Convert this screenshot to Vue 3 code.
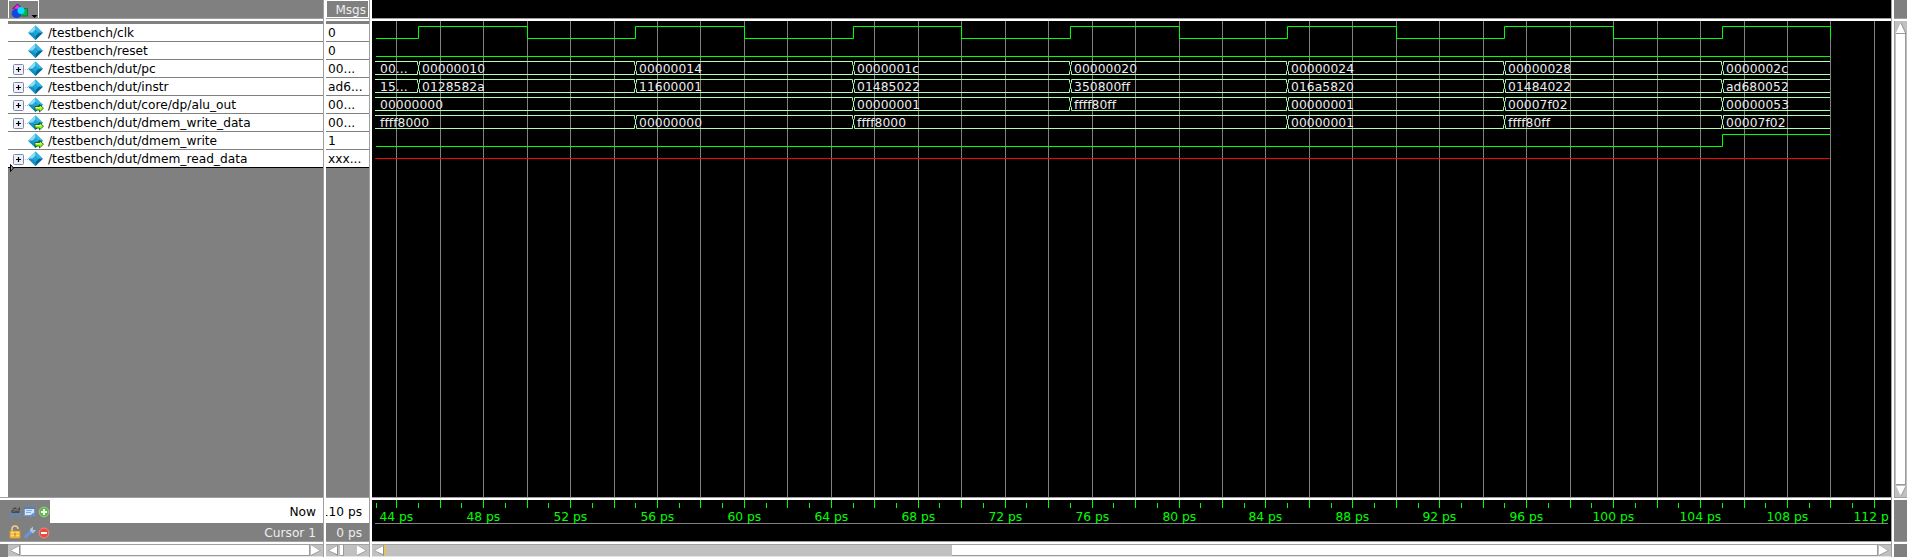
<script setup>
const signals = [
  { name: '/testbench/clk', value: '0' },
  { name: '/testbench/reset', value: '0' },
  { name: '/testbench/dut/pc', value: '00...', bus: true },
  { name: '/testbench/dut/instr', value: 'ad6...', bus: true },
  { name: '/testbench/dut/core/dp/alu_out', value: '00...', bus: true, out: true },
  { name: '/testbench/dut/dmem_write_data', value: '00...', bus: true, out: true },
  { name: '/testbench/dut/dmem_write', value: '1', out: true },
  { name: '/testbench/dut/dmem_read_data', value: 'xxx...', bus: true }
]

// Wave canvas starts 372px from the left; 21.731px per picosecond.
const tx = t => Math.floor(24.7 + (t - 44) * 21.731)
const END = tx(110)
const grid = Array.from({ length: 35 }, (_, i) => tx(44 + i * 2))
const minor = Array.from({ length: 35 }, (_, i) => (i ? tx(43 + i * 2) : 4))
const labels = Array.from({ length: 18 }, (_, i) => 44 + i * 4)

let clk = `M4 17.5H${tx(45) + 0.5}`
for (let t = 45; t <= 105; t += 10) {
  clk += `V5.5H${tx(t + 5) + 0.5}V17.5`
  if (t < 105) clk += `H${tx(t + 10) + 0.5}`
}
const writeLine = `M4 125.5H${tx(105) + 0.5}V113.5H${END}`

const buses = [
  { y: 40, v: [[43, '00...'], [45, '00000010'], [55, '00000014'], [65, '0000001c'], [75, '00000020'], [85, '00000024'], [95, '00000028'], [105, '0000002c']] },
  { y: 58, v: [[43, '15...'], [45, '0128582a'], [55, '11600001'], [65, '01485022'], [75, '350800ff'], [85, '016a5820'], [95, '01484022'], [105, 'ad680052']] },
  { y: 76, v: [[43, '00000000'], [65, '00000001'], [75, 'ffff80ff'], [85, '00000001'], [95, '00007f02'], [105, '00000053']] },
  { y: 94, v: [[43, 'ffff8000'], [55, '00000000'], [65, 'ffff8000'], [85, '00000001'], [95, 'ffff80ff'], [105, '00007f02']] }
]
function busPath(b) {
  const y = b.y + 0.5
  let d = ''
  b.v.forEach(([t], i) => {
    const x0 = i ? tx(t) + 1.5 : 3
    const next = b.v[i + 1]
    const x1 = next ? tx(next[0]) - 0.5 : END
    d += `M${x0} ${y}H${x1}M${x0} ${y + 13}H${x1}`
    if (i) {
      const c = tx(t) + 0.5
      d += `M${c + 1} ${y}v3l-1 1.5v4l1 1.5v3M${c - 1} ${y}v3l1 1.5M${c} ${y + 8.5}l-1 1.5v3`
    }
  })
  return d
}
const textX = t => (t === 43 ? 8 : tx(t) + 4)
</script>

<template>
  <div class="wave-window">
    <div class="gutter">
      <div class="g-head"></div><div class="g-body"></div><div class="g-foot"></div>
    </div>

    <section class="pane">
      <header class="head">
        <span class="tool">
          <svg width="29" height="17" viewBox="0 0 29 17">
            <path d="M3 8L8.500 3l4.500 4.500-4 2z" fill="#b010b8" />
            <path d="M5.500 7L8.500 4l2.500 2.500-3 1.500z" fill="#f030f0" />
            <path d="M3.500 7.500L8.500 3l5 5" fill="none" stroke="#503060" />
            <path d="M12 7.500h6.500v7.500h-8z" fill="#10b050" stroke="#086030" stroke-width=".7" />
            <ellipse cx="7.500" cy="12.500" rx="4.800" ry="4.500" fill="#1048e0" />
            <circle cx="12" cy="9.500" r="3.500" fill="#00e0ff" />
            <path d="M22.500 14h6l-3 3z" fill="#000" />
          </svg>
        </span>
      </header>
      <div class="hsep"></div>
      <div class="list">
        <div v-for="s in signals" :key="s.name" class="row">
          <span class="expander">
            <svg v-if="s.bus" width="16" height="12" viewBox="0 0 16 12">
              <rect x=".5" y="1.5" width="10" height="10" rx="1" fill="#eef0fa" stroke="#8088a8" />
              <path d="M3 6.500h5M5.500 4v5" stroke="#000" stroke-width="1.200" />
              <path d="M12 6.500h4" stroke="#bbb" stroke-dasharray="1 1" />
            </svg>
          </span>
          <svg class="gem" width="16" height="16" viewBox="0 0 16 16">
            <path d="M7.500 .5l7.300 7.200-7.300 7.300L.2 7.700z" fill="#1ba5d8" />
            <path d="M7.500 .5L.2 7.700h4l3.300-3.200z" fill="#8ddcf5" />
            <path d="M7.500 .5l7.300 7.200h-4L7.500 4.500z" fill="#36b8e6" />
            <path d="M.2 7.700h4l3.300 3.300v4z" fill="#1590c4" />
            <path d="M14.800 7.700h-4l-3.300 3.300v4z" fill="#096690" />
            <path v-if="s.out" d="M7 9.500h4.500V7.500l4 3.700-4 3.800v-2H7z" fill="#9f2" stroke="#174c08" stroke-width=".8" />
            <path v-if="s.out" d="M7.500 10.500h5" stroke="#efb" />
          </svg>
          <span class="name">{{ s.name }}</span>
        </div>
        <svg class="marker" width="4" height="8" viewBox="0 0 4 8"><path d="M.5 .5v7l3-3.500z" fill="#999" stroke="#000" /></svg>
      </div>
      <div class="hsep"></div>
      <div class="now">
        <svg class="icons" width="42" height="23" viewBox="0 0 42 23">
          <path d="M3 13l1-4 3-2 2 2 3-2v6z" fill="#454a50" />
          <path d="M4 9l8 2M5 12l6-4" stroke="#777" />
          <path d="M3 14.500h9M3 12v5M12 12v5" stroke="#4b90df" fill="none" />
          <rect x="16.500" y="7.500" width="10" height="8" fill="#d7e5f7" stroke="#739ccf" />
          <path d="M16 8h11" stroke="#4d83c6" stroke-width="2" />
          <path d="M18 10.500h6M18 12.500h5" stroke="#8aabd3" />
          <path d="M22 17l4-3.500" stroke="#5a90d8" stroke-width="2" />
          <circle cx="36" cy="12" r="4.900" fill="#5cb94b" stroke="#8ed17f" />
          <path d="M33 12h6M36 9v6" stroke="#fff" stroke-width="2" />
        </svg>
        <span class="fill">Now</span>
      </div>
      <div class="cursor">
        <svg class="icons" width="42" height="18" viewBox="0 0 42 18">
          <path d="M4 8V6q0-3 3-3t3 3" fill="none" stroke="#eed18a" stroke-width="1.500" />
          <rect x="2" y="8" width="10" height="7" fill="#f8bd3c" stroke="#d99a27" stroke-width=".7" />
          <path d="M3 9.500h8M3 12.500h8" stroke="#ffdd83" />
          <path d="M7 9.500v4" stroke="#a77a28" />
          <path d="M18 13.500l5.500-5.500" stroke="#6596d8" stroke-width="3.200" stroke-linecap="round" />
          <path d="M22 8V6l3-2.500v3.500h3l-3 3.500z" fill="#a9c4e8" />
          <circle cx="36" cy="10" r="4.900" fill="#e64c40" stroke="#f28a7c" />
          <path d="M33 10h6" stroke="#fff" stroke-width="2" />
        </svg>
        <span>Cursor 1</span>
      </div>
      <div class="hsep"></div>
      <div class="hbar">
        <i class="arrow left"></i><i class="thumb grow"></i><i class="arrow right"></i>
      </div>
    </section>

    <div class="vsep"></div>

    <section class="pane values">
      <header class="head"><span class="msgs">Msgs</span></header>
      <div class="hsep"></div>
      <div class="list">
        <div v-for="s in signals" :key="s.name" class="row"><span class="val">{{ s.value }}</span></div>
      </div>
      <div class="hsep"></div>
      <div class="now"><span class="fill">110 ps</span></div>
      <div class="cursor"><span>0 ps</span></div>
      <div class="hsep"></div>
      <div class="hbar">
        <i class="arrow left"></i><i class="thumb tiny"></i><i class="grow"></i><i class="arrow right"></i>
      </div>
    </section>

    <div class="vsep"></div>

    <section class="pane wave">
      <header class="head"></header>
      <div class="hsep"></div>
      <svg class="canvas" width="1519" height="476" viewBox="0 0 1519 476">
        <rect v-for="x in grid" :key="x" :x="x" y="0" width="1" height="476" fill="#808080" />
        <g fill="none" stroke="#00ff00">
          <path :d="clk" />
          <path :d="`M4 35.500H${END}`" />
          <path :d="writeLine" />
        </g>
        <path :d="`M3 137.500H${END}`" stroke="#ff0000" />
        <g v-for="b in buses" :key="b.y">
          <path :d="busPath(b)" fill="none" stroke="#b0ffb0" />
          <text v-for="[t, s] in b.v" :key="t" :x="textX(t)" :y="b.y + 12" class="data">{{ s }}</text>
        </g>
      </svg>
      <div class="hsep"></div>
      <svg class="canvas" width="1519" height="41" viewBox="0 0 1519 41">
        <rect v-for="x in grid" :key="x" :x="x" y="0" width="1" height="8" fill="#00ff00" />
        <rect v-for="x in minor" :key="x" :x="x" y="3" width="1" height="5" fill="#00ff00" />
        <rect x="3" y="23" width="1513" height="1" fill="#808080" />
        <text v-for="t in labels" :key="t" :x="tx(t) - (t < 100 ? 16.500 : 20.500)" y="21" class="tick">{{ t === 112 ? '112 p' : t + ' ps' }}</text>
      </svg>
      <div class="hsep"></div>
      <div class="hbar">
        <i class="arrow left"></i><i class="mark"></i><i class="track"></i><i class="thumb grow"></i><i class="arrow right"></i>
      </div>
    </section>

    <div class="vsep"></div>

    <section class="pane side">
      <header class="head"></header>
      <div class="hsep"></div>
      <div class="vbar">
        <svg width="12" height="12" viewBox="0 0 12 12"><rect width="12" height="12" fill="#c0c0c0" /><path d="M5.500 1L1 11h9z" fill="#fff" /><path d="M1 11.500h10L6 1" fill="none" stroke="#999" /></svg>
        <i class="vthumb"></i>
        <svg width="12" height="12" viewBox="0 0 12 12"><rect width="12" height="12" fill="#c0c0c0" /><path d="M1 1h10L6 11z" fill="#fff" /><path d="M11 1L6 11" stroke="#999" /></svg>
      </div>
      <div class="hsep"></div>
      <div class="blank"></div>
      <div class="hsep"></div>
      <div class="blank"></div>
    </section>
  </div>
</template>

<style>
html, body { margin: 0; background: #808080; }
</style>

<style scoped>
.wave-window {
  display: grid;
  grid-template-columns: 8px 315px 3px 43px 3px 1519px 3px 13px;
  width: 1907px;
  height: 557px;
  overflow: hidden;
  background: #808080;
  font-family: "DejaVu Sans", sans-serif;
  font-size: 12.2px;
  color: #000;
}
.gutter { display: grid; grid-template-rows: 21px 476px 60px; }
.g-head { background: linear-gradient(#808080 18px, #a0a0a0 18px 19px, #fff 19px); }
.g-body { background: #fff; }
.g-foot { background: linear-gradient(#a0a0a0 1px, #fff 1px 3px, #808080 3px 44px, #a0a0a0 44px 45px, #fff 45px 47px, #808080 47px); }
.pane {
  display: grid;
  grid-template-columns: 100%;
  grid-template-rows: 18px 3px 476px 3px 23px 18px 3px 13px;
  overflow: hidden;
}
.wave, .side { grid-template-rows: 18px 3px 476px 3px 41px 3px 13px; }
.hsep { background: linear-gradient(#a0a0a0 1px, #fff 1px); }
.vsep { background: linear-gradient(90deg, #a0a0a0 1px, #fff 1px); }
.head { display: flex; background: #808080; }
.tool { width: 29px; height: 17px; border: 1px solid #fff; border-bottom: 0; }
.tool svg { display: block; }
.msgs {
  flex: 1;
  box-sizing: border-box;
  border: 1px solid #fff;
  padding-right: 2px;
  text-align: right;
  line-height: 18px;
  color: #eee;
  font-size: 12px;
}
.wave { background: #000; }
.wave .head { background: #000; }
.list { position: relative; padding-top: 3px; }
.row {
  display: flex;
  align-items: center;
  height: 17px;
  border-bottom: 1px solid #808080;
  background: #fff;
  line-height: 17px;
  white-space: pre;
}
.row:nth-child(8) { border-color: #000; }
.expander { width: 15px; height: 12px; margin-left: 5px; }
.expander svg { display: block; }
.gem { margin-top: 1px; flex: none; }
.name { margin-left: 4px; padding-top: 2px; }
.val { padding: 2px 0 0 2px; }
.marker { position: absolute; left: 2px; top: 143px; }
.now { display: flex; background: #808080; line-height: 25px; overflow: hidden; }
.now .fill { flex: 1; display: flex; justify-content: flex-end; padding-right: 7px; background: #fff; white-space: nowrap; }
.icons { flex: none; display: block; }
.cursor { display: flex; justify-content: space-between; padding-right: 7px; line-height: 20px; color: #eee; }
.values .cursor { justify-content: flex-end; }
.values .fill { min-width: 0; }
.hbar {
  display: flex;
  box-sizing: border-box;
  padding: 0 1px;
  border-top: 1px solid #a0a0a0;
  border-bottom: 1px solid #e4e4e4;
  background: #c0c0c0;
}
.thumb { box-sizing: border-box; background: #fff; border-bottom: 1px solid #999; border-right: 1px solid #999; }
.grow { flex: 1; }
.tiny { width: 4px; margin-left: 1px; }
.arrow { width: 12px; height: 11px; background: #c0c0c0; position: relative; }
.arrow::before, .arrow::after { content: ""; position: absolute; inset: 0 1px; }
.arrow::before { background: #909090; }
.arrow::after { background: #fff; }
.left::before { clip-path: polygon(0 50%, 100% 0, 100% 100%); }
.left::after { clip-path: polygon(10% 50%, 90% 9%, 90% 84%); }
.right::before { clip-path: polygon(100% 50%, 0 0, 0 100%); }
.right::after { clip-path: polygon(88% 50%, 0 2%, 0 92%); }
.mark { width: 1px; background: #ffcc00; }
.track { width: 566px; }
.canvas { display: block; }
.data { fill: #eee; font-size: 12.3px; letter-spacing: 0.06px; }
.tick { fill: #00ff00; font-size: 12.3px; }
.vbar {
  display: flex;
  flex-direction: column;
  box-sizing: border-box;
  padding: 1px 0 0;
  border-left: 1px solid #a0a0a0;
  background: #c0c0c0;
}
.vbar svg { display: block; flex: none; }
.vthumb { flex: 1; margin: 0 1px; background: #fff; border-bottom: 1px solid #999; border-right: 1px solid #999; }
.blank { background: #808080; }
</style>
